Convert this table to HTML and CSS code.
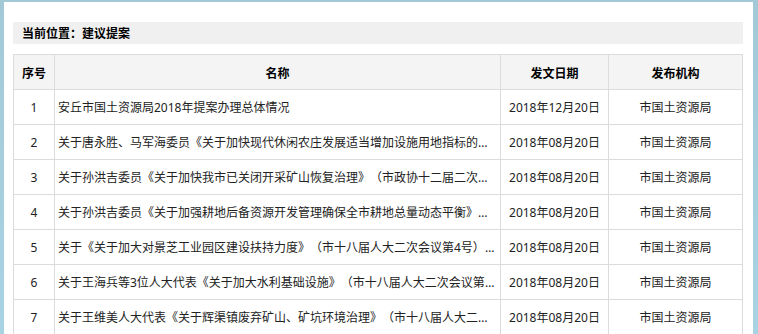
FILE: index.html
```html
<!DOCTYPE html>
<html lang="zh-CN">
<head>
<meta charset="utf-8">
<title>建议提案</title>
<link rel="stylesheet" href="styles.css">
</head>
<body>
<div class="panel">
  <div class="crumb">当前位置：建议提案</div>
  <table class="list">
    <colgroup>
      <col class="c-no"><col class="c-name"><col class="c-date"><col class="c-org">
    </colgroup>
    <thead>
      <tr><th>序号</th><th>名称</th><th>发文日期</th><th>发布机构</th></tr>
    </thead>
    <tbody>
      <tr><td class="no">1</td><td class="name">安丘市国土资源局2018年提案办理总体情况</td><td class="ctr">2018年12月20日</td><td class="ctr">市国土资源局</td></tr>
      <tr><td class="no">2</td><td class="name">关于唐永胜、马军海委员《关于加快现代休闲农庄发展适当增加设施用地指标的建议》（市政协十二届二次会议第12号）的答复</td><td class="ctr">2018年08月20日</td><td class="ctr">市国土资源局</td></tr>
      <tr><td class="no">3</td><td class="name">关于孙洪吉委员《关于加快我市已关闭开采矿山恢复治理》（市政协十二届二次会议第35号）的答复</td><td class="ctr">2018年08月20日</td><td class="ctr">市国土资源局</td></tr>
      <tr><td class="no">4</td><td class="name">关于孙洪吉委员《关于加强耕地后备资源开发管理确保全市耕地总量动态平衡》（市政协十二届二次会议第36号）的答复</td><td class="ctr">2018年08月20日</td><td class="ctr">市国土资源局</td></tr>
      <tr><td class="no">5</td><td class="name">关于《关于加大对景芝工业园区建设扶持力度》（市十八届人大二次会议第4号）建议的答复</td><td class="ctr">2018年08月20日</td><td class="ctr">市国土资源局</td></tr>
      <tr><td class="no">6</td><td class="name">关于王海兵等3位人大代表《关于加大水利基础设施》（市十八届人大二次会议第21号）建议的答复</td><td class="ctr">2018年08月20日</td><td class="ctr">市国土资源局</td></tr>
      <tr><td class="no">7</td><td class="name">关于王维美人大代表《关于辉渠镇废弃矿山、矿坑环境治理》（市十八届人大二次会议第30号）建议的答复</td><td class="ctr">2018年08月20日</td><td class="ctr">市国土资源局</td></tr>
    </tbody>
  </table>
</div>
</body>
</html>
```

FILE: styles.css
```css
html, body {
  margin: 0;
  padding: 0;
}
body {
  background: linear-gradient(180deg, #a3c9d7 0%, #a8d3e3 100%);
  font-family: "Noto Sans", "Noto Sans CJK SC", sans-serif;
  font-size: 12px;
  color: #222;
  height: 334px;
  overflow: hidden;
  text-spacing-trim: space-all;
}
.panel {
  background: #fff;
  margin: 2px 5px 0 4px;
  padding: 20px 10px 0 9px;
  height: 400px;
}
.crumb {
  background: #f0f0f0;
  height: 22px;
  line-height: 22px;
  padding-left: 9px;
  font-weight: bold;
  color: #000;
  font-family: "Noto Sans CJK SC", sans-serif;
}
.list {
  margin-top: 10px;
  width: 729px;
  border-collapse: collapse;
  table-layout: fixed;
}
.c-no { width: 41px; }
.c-name { width: 446px; }
.c-date { width: 108px; }
.c-org { width: 134px; }
.list th, .list td {
  border: 1px solid #dcdcdc;
  height: 34px;
  padding: 0 3px;
  box-sizing: border-box;
  white-space: nowrap;
  overflow: hidden;
  text-overflow: ellipsis;
  vertical-align: middle;
}
.list th {
  background: #f4f4f4;
  font-weight: bold;
  color: #000;
  text-align: center;
  font-family: "Noto Sans CJK SC", sans-serif;
}
.list tr { height: 35px; }
.list td.no, .list td.ctr { text-align: center; }
.list td.name { text-align: left; }
```
